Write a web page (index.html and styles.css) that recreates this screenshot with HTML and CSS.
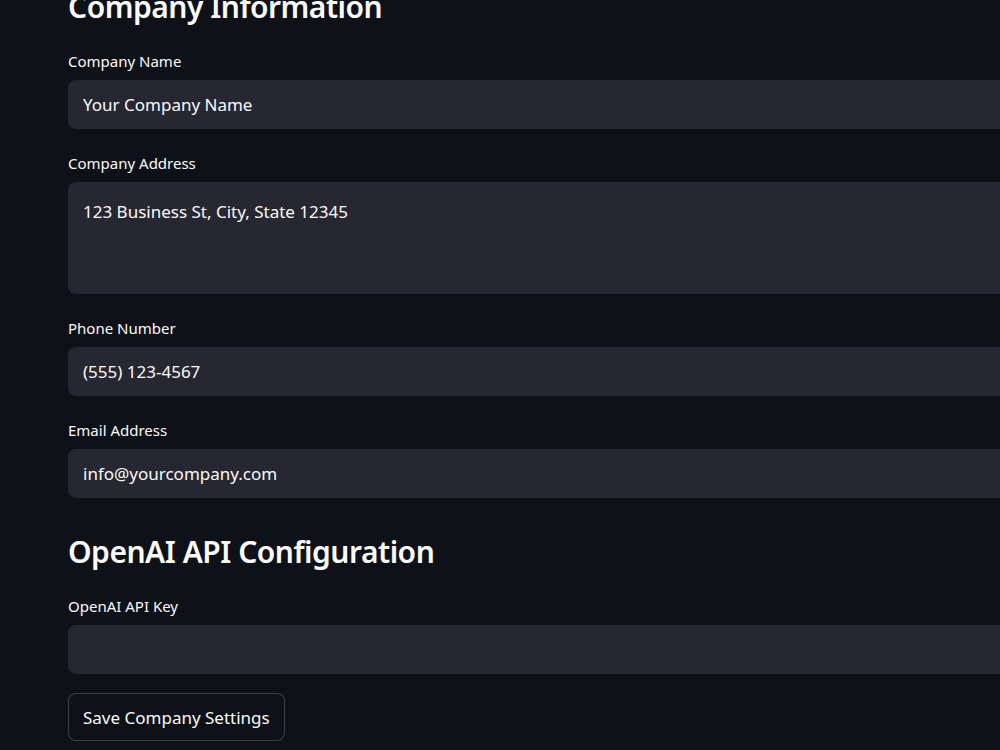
FILE: index.html
```html
<!DOCTYPE html>
<html lang="en">
<head>
    <meta charset="UTF-8">
    <meta name="viewport" content="width=device-width, initial-scale=1.0">
    <title>Company Settings</title>
    <link rel="stylesheet" href="styles.css">
</head>
<body>
    <main class="settings">
        <h2 class="section-title">Company Information</h2>

        <div class="field">
            <label class="field-label" for="companyName">Company Name</label>
            <input type="text" id="companyName" class="field-input" value="Your Company Name">
        </div>

        <div class="field">
            <label class="field-label" for="companyAddress">Company Address</label>
            <textarea id="companyAddress" class="field-input field-textarea">123 Business St, City, State 12345</textarea>
        </div>

        <div class="field">
            <label class="field-label" for="phone">Phone Number</label>
            <input type="text" id="phone" class="field-input" value="(555) 123-4567">
        </div>

        <div class="field">
            <label class="field-label" for="email">Email Address</label>
            <input type="text" id="email" class="field-input" value="info@yourcompany.com">
        </div>

        <h2 class="section-title">OpenAI API Configuration</h2>

        <div class="field">
            <label class="field-label" for="apiKey">OpenAI API Key</label>
            <input type="password" id="apiKey" class="field-input" value="">
        </div>

        <div class="actions">
            <button type="button" class="save-button">Save Company Settings</button>
        </div>
    </main>
</body>
</html>
```

FILE: styles.css
```css
* {
    margin: 0;
    padding: 0;
    box-sizing: border-box;
}

html, body {
    height: 100%;
    overflow: hidden;
}

body {
    font-family: "Noto Sans", "Open Sans", sans-serif;
    background: #0e1117;
    color: #fafafa;
}

/* page is scrolled a little, so the first heading is cut at the top */
.settings {
    display: flex;
    flex-direction: column;
    gap: 24px;
    width: 1100px;
    margin-top: -23px;
    padding-left: 68px;
}

.section-title {
    font-size: 30px;
    font-weight: 600;
    letter-spacing: -0.5px;
    line-height: 41px;
    padding-top: 9px;
    color: #fafafa;
}

.field {
    display: flex;
    flex-direction: column;
}

.field-label {
    font-size: 15px;
    line-height: 20px;
    height: 20px;
    margin-bottom: 9px;
    color: #fafafa;
}

.field-input {
    width: 100%;
    height: 49px;
    padding: 0 15px;
    border: none;
    border-radius: 8px;
    background: #262730;
    color: #fafafa;
    font-family: inherit;
    font-size: 17px;
    outline: none;
}

.field-textarea {
    height: 112px;
    padding: 16px 15px;
    line-height: 1.6;
    resize: none;
}

.actions {
    margin-top: -5px;
}

.save-button {
    height: 48px;
    padding: 0 14px;
    border: 1px solid rgba(250, 250, 250, 0.2);
    border-radius: 8px;
    background: #0e1117;
    color: #fafafa;
    font-family: inherit;
    font-size: 17px;
    cursor: pointer;
}
```
